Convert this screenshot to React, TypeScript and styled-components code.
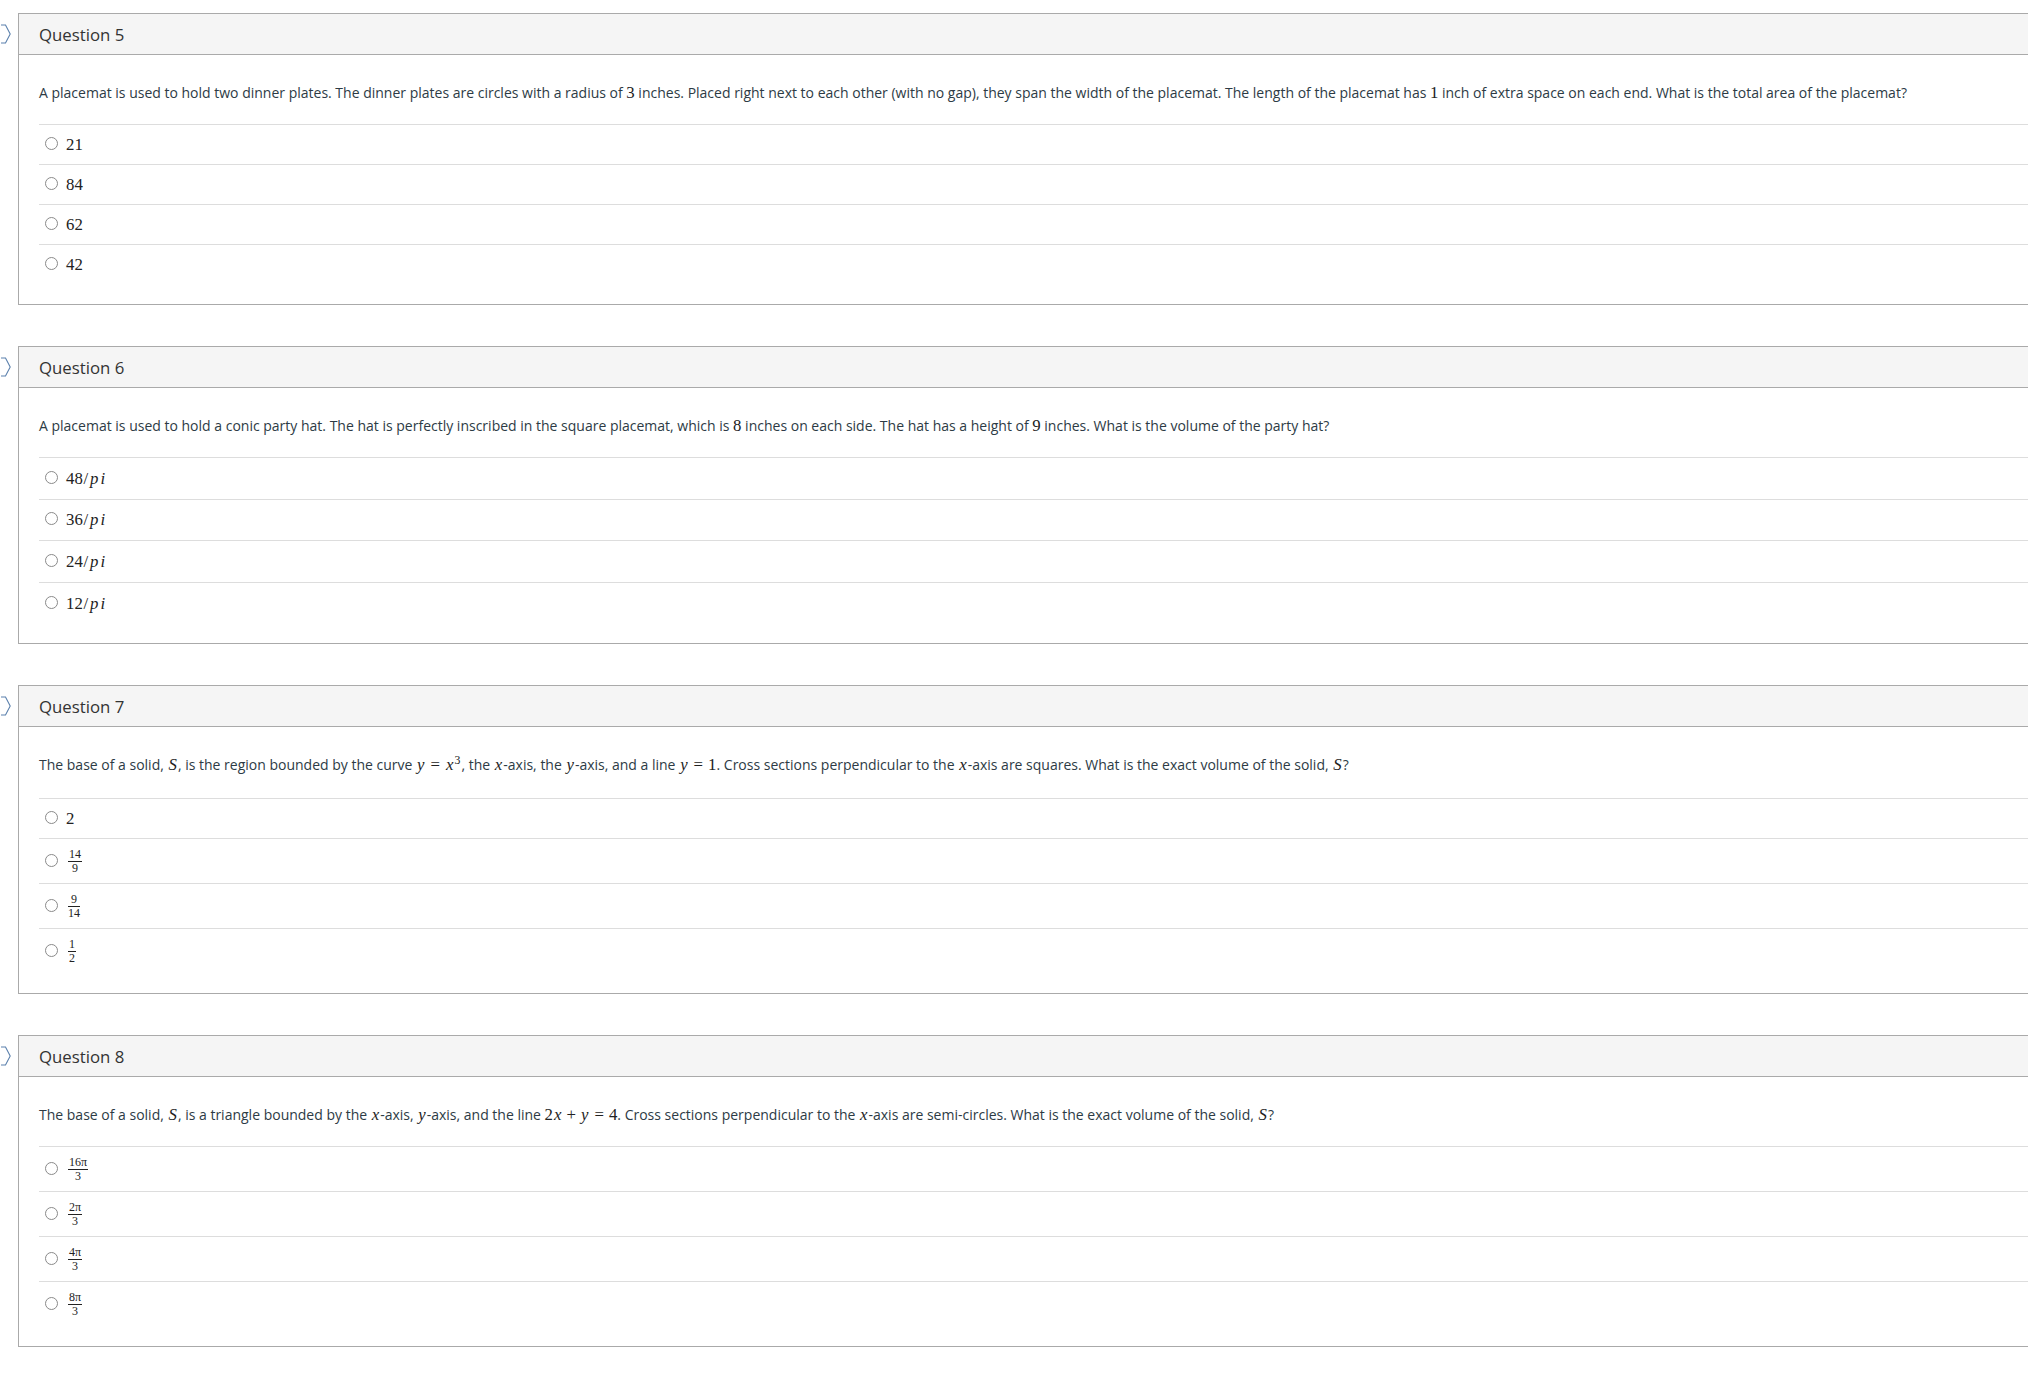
import React from "react";
import styled, { createGlobalStyle } from "styled-components";

const GlobalStyle = createGlobalStyle`
    html, body {
        margin: 0;
        padding: 0;
        background: #ffffff;
        overflow: hidden;
    }
    body {
        font-family: "Open Sans", "Liberation Sans", sans-serif;
        color: #2d3b45;
    }
`;

const Page = styled.div`
    padding: 13px 0 0 18px;
    display: flex;
    flex-direction: column;
    gap: 41px;
`;

const Panel = styled.section`
    position: relative;
    margin-right: -40px;
    border: 1px solid #aaaaaa;
    background: #ffffff;
`;

const Marker = styled.svg`
    position: absolute;
    left: -18px;
    top: 10px;
    width: 10px;
    height: 20px;
`;

const Header = styled.header`
    height: 40px;
    display: flex;
    align-items: center;
    padding-left: 20px;
    background: #f5f5f5;
    border-bottom: 1px solid #aaaaaa;
    font-size: 16.8px;
    color: #333333;
`;

const Body = styled.div`
    padding: 28px 0 20px 20px;
`;

const QuestionText = styled.p<{ $raised?: boolean }>`
    margin: 0 0 ${(p) => (p.$raised ? "23px" : "21px")} 0;
    font-size: 14px;
    line-height: 20px;
`;

const Answers = styled.ul`
    list-style: none;
    margin: 0;
    padding: 0;
`;

const Answer = styled.li<{ $tall?: boolean }>`
    display: flex;
    align-items: center;
    gap: 8px;
    padding: ${(p) => (p.$tall ? "9.8px" : "9px")} 0 ${(p) => (p.$tall ? "9.8px" : "9px")} 6px;
    border-top: 1px solid #dddddd;
    line-height: 21px;
`;

const Radio = styled.span`
    box-sizing: border-box;
    width: 13px;
    height: 13px;
    border-radius: 50%;
    border: 1px solid #8a8a8a;
    background: #ffffff;
    flex: none;
    margin-top: -2px;
`;

const Math = styled.span`
    font-family: "Liberation Serif", "DejaVu Serif", serif;
    font-size: 16.8px;
    color: #222222;
    white-space: nowrap;
`;

const Mi = styled.i`
    font-style: italic;
    padding: 0 0.06em;
`;

const Mo = styled.span<{ $space?: number }>`
    padding: 0 ${(p) => p.$space ?? 0}em;
`;

const Sup = styled.sup`
    font-size: 0.7em;
    vertical-align: 0.55em;
    line-height: 0;
    padding-right: 0.1em;
`;

const Frac = styled.span`
    display: inline-flex;
    flex-direction: column;
    align-items: center;
    font-family: "Liberation Serif", "DejaVu Serif", serif;
    font-size: 12px;
    line-height: 12px;
    color: #222222;
    padding: 0 2px;
`;

const Num = styled.span`
    padding: 0 1px 1px;
    border-bottom: 1px solid #222222;
    align-self: stretch;
    text-align: center;
`;

const Den = styled.span``;

function Var({ children }: { children: React.ReactNode }) {
    return (
        <Math>
            <Mi>{children}</Mi>
        </Math>
    );
}

function Fraction({ top, bottom }: { top: React.ReactNode; bottom: React.ReactNode }) {
    return (
        <Frac>
            <Num>{top}</Num>
            <Den>{bottom}</Den>
        </Frac>
    );
}

const pi = "\u03c0";

interface QuestionData {
    title: string;
    text: React.ReactNode;
    options: React.ReactNode[];
    tall?: boolean;
    raised?: boolean;
}

const questions: QuestionData[] = [
    {
        title: "Question 5",
        text: (
            <>
                A placemat is used to hold two dinner plates. The dinner plates are circles with a radius of <Math>3</Math> inches.
                Placed right next to each other (with no gap), they span the width of the placemat. The length of the placemat
                has <Math>1</Math> inch of extra space on each end. What is the total area of the placemat?
            </>
        ),
        options: ["21", "84", "62", "42"].map((n) => <Math key={n}>{n}</Math>),
    },
    {
        title: "Question 6",
        tall: true,
        text: (
            <>
                A placemat is used to hold a conic party hat. The hat is perfectly inscribed in the square placemat, which
                is <Math>8</Math> inches on each side. The hat has a height of <Math>9</Math> inches. What is the volume of the party hat?
            </>
        ),
        options: ["48", "36", "24", "12"].map((n) => (
            <Math key={n}>
                {n}
                <Mo $space={0.05}>/</Mo>
                <Mi>p</Mi>
                <Mi>i</Mi>
            </Math>
        )),
    },
    {
        title: "Question 7",
        raised: true,
        text: (
            <>
                The base of a solid, <Var>S</Var>, is the region bounded by the curve{" "}
                <Math>
                    <Mi>y</Mi>
                    <Mo $space={0.3}>=</Mo>
                    <Mi>x</Mi>
                    <Sup>3</Sup>
                </Math>
                , the <Var>x</Var>-axis, the <Var>y</Var>-axis, and a line{" "}
                <Math>
                    <Mi>y</Mi>
                    <Mo $space={0.3}>=</Mo>1
                </Math>
                . Cross sections perpendicular to the <Var>x</Var>-axis are squares. What is the exact volume of the
                solid, <Var>S</Var>?
            </>
        ),
        options: [
            <Math key="2">2</Math>,
            <Fraction key="a" top="14" bottom="9" />,
            <Fraction key="b" top="9" bottom="14" />,
            <Fraction key="c" top="1" bottom="2" />,
        ],
    },
    {
        title: "Question 8",
        text: (
            <>
                The base of a solid, <Var>S</Var>, is a triangle bounded by the <Var>x</Var>-axis, <Var>y</Var>-axis, and the
                line{" "}
                <Math>
                    2<Mi>x</Mi>
                    <Mo $space={0.24}>+</Mo>
                    <Mi>y</Mi>
                    <Mo $space={0.3}>=</Mo>4
                </Math>
                . Cross sections perpendicular to the <Var>x</Var>-axis are semi-circles. What is the exact volume of the
                solid, <Var>S</Var>?
            </>
        ),
        options: ["16", "2", "4", "8"].map((n) => <Fraction key={n} top={`${n}${pi}`} bottom="3" />),
    },
];

function Question({ q }: { q: QuestionData }) {
    return (
        <Panel>
            <Marker viewBox="0 0 10 20">
                <polyline points="0,1 4.5,1 9.2,10 4.5,19 0,19" fill="none" stroke="#5b80ad" strokeWidth="1.1" />
            </Marker>
            <Header>{q.title}</Header>
            <Body>
                <QuestionText $raised={q.raised}>{q.text}</QuestionText>
                <Answers>
                    {q.options.map((opt, i) => (
                        <Answer key={i} $tall={q.tall}>
                            <Radio />
                            {opt}
                        </Answer>
                    ))}
                </Answers>
            </Body>
        </Panel>
    );
}

export default function App() {
    return (
        <>
            <GlobalStyle />
            <Page>
                {questions.map((q) => (
                    <Question key={q.title} q={q} />
                ))}
            </Page>
        </>
    );
}
